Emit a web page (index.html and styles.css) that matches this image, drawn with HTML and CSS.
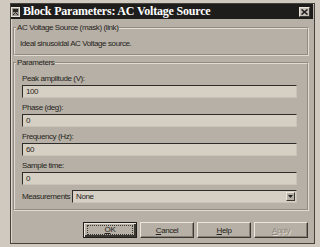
FILE: index.html
```html
<!DOCTYPE html>
<html lang="en">
<head>
  <meta charset="UTF-8" />
  <title>Block Parameters: AC Voltage Source</title>
  <link rel="stylesheet" href="styles.css">
</head>
<body>
  <div class="dialog">
    <div class="titlebar">
      <svg class="app-icon" width="9" height="10" viewBox="0 0 9 10">
        <rect x="0.5" y="0.5" width="8" height="9" fill="#9c978e" stroke="#e8e2d8"/>
        <rect x="2" y="2" width="5" height="3" fill="#2a2826"/>
        <path d="M2 8 L4.5 5.5 L7 8" stroke="#2a2826" fill="none"/>
      </svg>
      <span class="title">Block Parameters: AC Voltage Source</span>
      <span class="close">
        <svg width="7" height="6" viewBox="0 0 7 6">
          <path d="M0.5 0.5 L6.5 5.5 M6.5 0.5 L0.5 5.5" stroke="#1e1e1e" stroke-width="1.6"/>
        </svg>
      </span>
    </div>

    <div class="content">
      <fieldset class="group">
        <legend>AC Voltage Source (mask) (link)</legend>
        <p class="desc">Ideal sinusoidal AC Voltage source.</p>
      </fieldset>

      <fieldset class="group params">
        <legend>Parameters</legend>
        <div class="field">
          <label>Peak amplitude (V):</label>
          <div class="edit">100</div>
        </div>
        <div class="field">
          <label>Phase (deg):</label>
          <div class="edit">0</div>
        </div>
        <div class="field">
          <label>Frequency (Hz):</label>
          <div class="edit">60</div>
        </div>
        <div class="field">
          <label>Sample time:</label>
          <div class="edit">0</div>
        </div>
        <div class="select-row">
          <label>Measurements</label>
          <div class="combo">
            <span>None</span>
            <span class="drop">
              <svg width="5" height="3" viewBox="0 0 5 3"><path d="M0 0 H5 L2.5 3 Z" fill="#1e1e1e"/></svg>
            </span>
          </div>
        </div>
      </fieldset>

      <div class="buttons">
        <button class="btn default"><span class="focus"><u>O</u>K</span></button>
        <button class="btn"><u>C</u>ancel</button>
        <button class="btn"><u>H</u>elp</button>
        <button class="btn disabled"><u>A</u>pply</button>
      </div>
    </div>
  </div>
</body>
</html>
```

FILE: styles.css
```css
body {
  margin: 0;
  background: #cfc9bf;
  font-family: 'Liberation Sans', Arial, sans-serif;
  font-size: 8px;
  letter-spacing: -0.4px;
  color: #262420;
}

.dialog {
  margin: 3px 0 0 10px;
  width: 305px;
  height: 241px;
  box-sizing: border-box;
  background: #b6b0a6;
  border: 1px solid #45423d;
  box-shadow: inset 1px 1px 0 #ddd7cc;
}

.titlebar {
  display: flex;
  align-items: center;
  height: 15px;
  margin-right: 1px;
  padding-left: 0;
  background: #1e1d1c;
  color: #fff;
}

.app-icon {
  display: block;
  margin-right: 3px;
}

.title {
  font-family: 'Liberation Serif', 'Times New Roman', serif;
  font-size: 12px;
  font-weight: bold;
  letter-spacing: -0.2px;
  line-height: 15px;
}

.close {
  display: flex;
  align-items: center;
  justify-content: center;
  margin-left: auto;
  margin-right: 3px;
  width: 11px;
  height: 10px;
  box-sizing: border-box;
  background: #c6c0b6;
  border: 1px solid;
  border-color: #ece6dc #3b3833 #3b3833 #ece6dc;
}

.content {
  padding: 4px 5px 0 2px;
}

.group {
  margin: 0;
  padding: 0 0 6px 0;
  min-width: 0;
  border: 2px groove #e2dcd2;
}

.group legend {
  margin-left: 1px;
  padding: 0 1px;
  line-height: 9px;
}

.desc {
  margin: 7px 0 0 5px;
  line-height: 9px;
}

.params {
  margin-top: 2px;
}

.field {
  margin: 0 10px 5px 7px;
}

.params .field:first-of-type {
  margin-top: 7px;
}

.field label {
  display: block;
  line-height: 9px;
  margin-bottom: 2px;
}

.edit {
  height: 13px;
  box-sizing: border-box;
  padding-left: 3px;
  line-height: 11px;
  background: #d6cfc4;
  border: 1px solid;
  border-color: #2e2c29 #c9c3b9 #c9c3b9 #2e2c29;
}

.select-row {
  display: flex;
  align-items: center;
  margin: 0 10px 0 7px;
}

.select-row label {
  width: 50px;
}

.combo {
  flex: 1;
  display: flex;
  align-items: center;
  height: 13px;
  box-sizing: border-box;
  padding-left: 3px;
  background: #d6cfc4;
  border: 1px solid;
  border-color: #2e2c29 #c9c3b9 #c9c3b9 #2e2c29;
}

.drop {
  display: flex;
  align-items: center;
  justify-content: center;
  margin-left: auto;
  margin-right: 1px;
  width: 9px;
  height: 9px;
  box-sizing: border-box;
  background: #b6b0a6;
  border: 1px solid;
  border-color: #ece6dc #3b3833 #3b3833 #ece6dc;
}

.buttons {
  display: flex;
  justify-content: flex-end;
  gap: 3px;
  margin: 11px 1px 0 0;
}

.btn {
  width: 54px;
  height: 16px;
  padding: 0;
  box-sizing: border-box;
  background: #b6b0a6;
  font-family: 'Liberation Sans', Arial, sans-serif;
  font-size: 8px;
  letter-spacing: -0.4px;
  color: #262420;
  border: 1px solid;
  border-color: #ece6dc #3b3833 #3b3833 #ece6dc;
  box-shadow: inset -1px -1px 0 #857f76;
}

.btn.default {
  border: 1px solid #1e1d1c;
  box-shadow: inset 1px 1px 0 #ece6dc, inset -2px -2px 0 #3b3833;
}

.btn .focus {
  display: block;
  margin: 2px 3px;
  line-height: 8px;
  border: 1px dotted #3b3833;
}

.btn.disabled {
  color: #8d887f;
  text-shadow: 1px 1px 0 #e2dcd2;
}
```
